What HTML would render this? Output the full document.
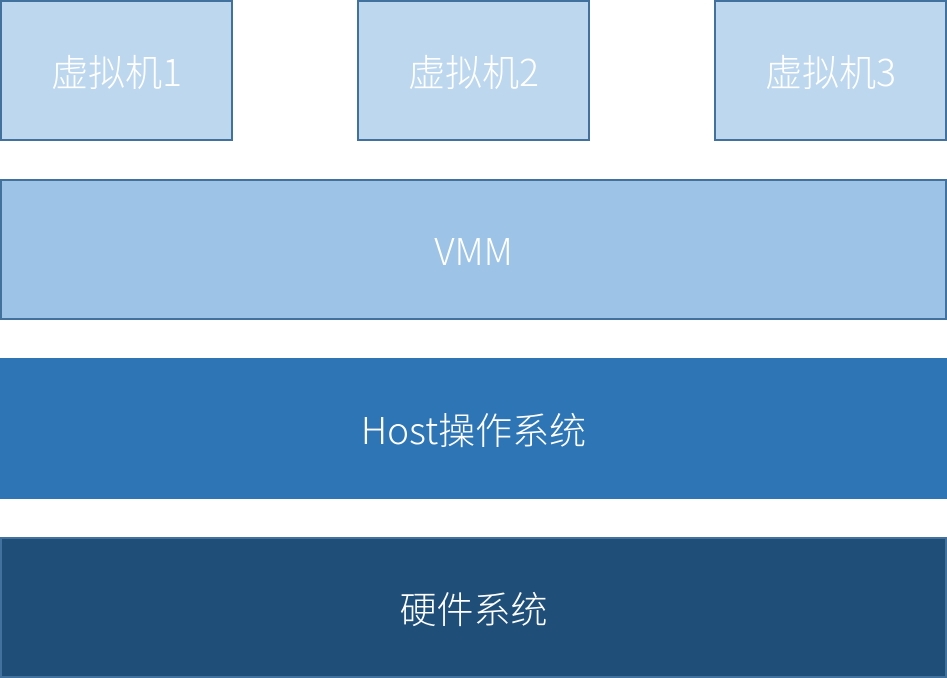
<!DOCTYPE html>
<html><head><meta charset="utf-8"><style>
body{margin:0;width:947px;height:678px;background:#fff;position:relative;overflow:hidden;font-family:"Noto Sans CJK SC","Liberation Sans",sans-serif;font-weight:300;}
.b{position:absolute;box-sizing:border-box;border:2px solid #41719c;color:#fff;display:flex;align-items:center;justify-content:center;font-size:37px;line-height:1;}
.vm{background:#bdd7ee;top:0;height:141px;width:233px;}
</style></head><body>
<div class="b vm" style="left:0">虚拟机1</div>
<div class="b vm" style="left:357px">虚拟机2</div>
<div class="b vm" style="left:714px">虚拟机3</div>
<div class="b" style="left:0;top:179px;width:947px;height:141px;background:#9dc3e6">VMM</div>
<div class="b" style="left:0;top:358px;width:947px;height:141px;background:#2e75b6;border-color:#2e75b6">Host操作系统</div>
<div class="b" style="left:0;top:537px;width:947px;height:141px;background:#1f4e79;border-color:#41719c">硬件系统</div>
</body></html>
